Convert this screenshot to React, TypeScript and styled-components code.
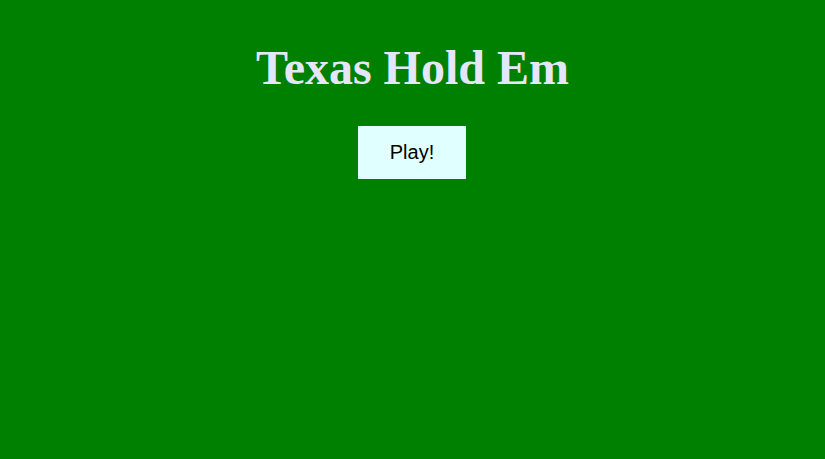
import React from "react";
import styled, { createGlobalStyle } from "styled-components";

const Global = createGlobalStyle`
  html, body {
    margin: 0;
    padding: 0;
    background: #008000;
    height: 100%;
  }
  body {
    font-family: "Liberation Serif", "Times New Roman", serif;
  }
`;

const Page = styled.main`
  display: flex;
  flex-direction: column;
  align-items: center;
  min-height: 459px;
  padding-top: 40px;
  box-sizing: border-box;
`;

const Title = styled.h1`
  margin: 0;
  font-family: "Liberation Serif", "Times New Roman", serif;
  font-weight: bold;
  font-size: 48px;
  line-height: 55px;
  color: #e6e6fa;
`;

const PlayButton = styled.button`
  margin-top: 31px;
  margin-right: 1px;
  width: 108px;
  height: 53px;
  border: none;
  background: #e0ffff;
  color: #000;
  font-family: "Liberation Sans", Arial, sans-serif;
  font-size: 20px;
  cursor: pointer;
`;

export default function App() {
  return (
    <>
      <Global />
      <Page>
        <Title>Texas Hold Em</Title>
        <PlayButton>Play!</PlayButton>
      </Page>
    </>
  );
}
